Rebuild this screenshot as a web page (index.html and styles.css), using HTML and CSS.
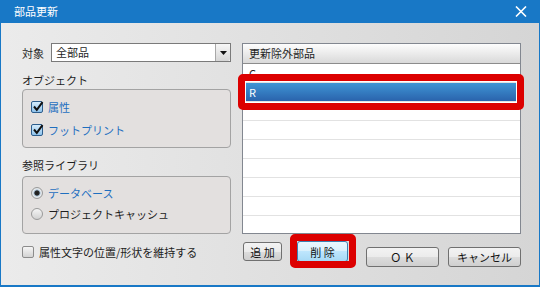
FILE: index.html
```html
<!DOCTYPE html>
<html lang="ja">
<head>
  <meta charset="UTF-8">
  <title>部品更新</title>
  <link rel="stylesheet" href="styles.css">
</head>
<body>
  <div class="window">
    <!-- Title bar -->
    <div class="titlebar">
      <span class="title">部品更新</span>
      <svg class="close" width="12" height="11" viewBox="0 0 12 11">
        <path d="M1 0.5 L11 10.5 M11 0.5 L1 10.5" stroke="#fff" stroke-width="1.6" fill="none"/>
      </svg>
    </div>

    <div class="content">
      <!-- Left side: options -->
      <div class="left">
        <div class="target-row">
          <span class="target-label">対象</span>
          <div class="combo">
            <span class="combo-text">全部品</span>
            <span class="combo-btn">
              <svg width="7" height="4" viewBox="0 0 7 4"><path d="M0 0 H7 L3.5 4 Z" fill="#111"/></svg>
            </span>
          </div>
        </div>

        <div class="section-label">オブジェクト</div>
        <div class="group group-object">
          <div class="option checked">
            <span class="check on">
              <svg class="tick" width="12" height="12" viewBox="0 0 12 12"><path d="M2 5.5 L4.8 8.8 L10.5 1.2" stroke="#111" stroke-width="2" fill="none"/></svg>
            </span>
            属性
          </div>
          <div class="option checked">
            <span class="check on">
              <svg class="tick" width="12" height="12" viewBox="0 0 12 12"><path d="M2 5.5 L4.8 8.8 L10.5 1.2" stroke="#111" stroke-width="2" fill="none"/></svg>
            </span>
            フットプリント
          </div>
        </div>

        <div class="section-label section-library">参照ライブラリ</div>
        <div class="group group-library">
          <div class="option radio-option checked"><span class="radio on"></span>データベース</div>
          <div class="option radio-option"><span class="radio"></span>プロジェクトキャッシュ</div>
        </div>

        <div class="option keep"><span class="check"></span>属性文字の位置/形状を維持する</div>
      </div>

      <!-- Right side: exclusion list and buttons -->
      <div class="right">
        <div class="list">
          <div class="list-header">更新除外部品</div>
          <div class="list-row">C</div>
          <div class="list-row selected">R<span class="mark mark-row"></span></div>
          <div class="list-row"></div>
          <div class="list-row"></div>
          <div class="list-row"></div>
          <div class="list-row"></div>
          <div class="list-row"></div>
          <div class="list-row"></div>
        </div>

        <div class="buttons">
          <button class="btn btn-add">追 加</button>
          <button class="btn btn-delete">削 除<span class="mark mark-btn"></span></button>
          <button class="btn btn-ok">Ｏ Ｋ</button>
          <button class="btn btn-cancel">キャンセル</button>
        </div>
      </div>
    </div>
  </div>
</body>
</html>
```

FILE: styles.css
```css
* {
  box-sizing: border-box;
}

body {
  margin: 0;
  font-family: "Noto Sans CJK JP", "Noto Sans", sans-serif;
  font-size: 11px;
  color: #1e1e1e;
}

.window {
  width: 540px;
  height: 287px;
  background: #1878c6;
  padding: 0 1px 2px 1px;
  display: flex;
  flex-direction: column;
}

/* Title bar */
.titlebar {
  height: 23px;
  margin: 0 -1px;
  padding: 0 13px 1px 14px;
  display: flex;
  align-items: center;
  justify-content: space-between;
  color: #fff;
  font-size: 11px;
}

.content {
  flex: 1;
  background: linear-gradient(to right, #ebebeb, #d5d5d5);
  display: flex;
  gap: 11px;
  padding: 20px 0 0 21px;
}

/* Left column */
.left {
  width: 209px;
  display: flex;
  flex-direction: column;
}

.target-row {
  height: 19px;
  display: flex;
  align-items: center;
}

.target-label {
  width: 29px;
  line-height: 14px;
}

.combo {
  width: 180px;
  height: 19px;
  border: 1px solid #7a7a7a;
  background: #fff;
  display: flex;
}

.combo-text {
  flex: 1;
  padding-left: 4px;
  line-height: 17px;
}

.combo-btn {
  width: 15px;
  border-left: 1px solid #a8a8a8;
  border-radius: 0 2px 2px 0;
  background: linear-gradient(#f7f7f7, #d6d6d6);
  display: flex;
  align-items: center;
  justify-content: center;
}

.section-label {
  margin-top: 11px;
  line-height: 14px;
}

.section-library {
  margin-top: 10px;
}

.group {
  border: 1px solid #a3a3a3;
  border-radius: 4px;
  background: #e3e0df;
  padding: 5px 0 0 8px;
}

.group-object {
  margin-top: 2px;
  height: 59px;
}

.group-library {
  margin-top: 4px;
  height: 58px;
}

.option {
  height: 23px;
  display: flex;
  align-items: center;
  gap: 5px;
  line-height: 14px;
}

.option.checked {
  color: #1f6fbf;
}

.radio-option {
  height: 21px;
}

.keep {
  margin-top: 11px;
  height: 14px;
}

/* Check boxes and radio buttons */
.check {
  position: relative;
  width: 12px;
  height: 12px;
  flex: none;
  border: 1px solid #8c8c8c;
  border-radius: 2px;
  background: linear-gradient(#f6f6f6, #d3d3d3);
}

.check.on {
  border-color: #2c5d8c;
  background: linear-gradient(#d4ebfb, #8fc3ec);
}

.tick {
  position: absolute;
  left: 0;
  top: -1px;
}

.radio {
  width: 12px;
  height: 12px;
  flex: none;
  border: 1px solid #9a9a9a;
  border-radius: 50%;
  background: linear-gradient(#f5f5f5, #d2d2d2);
}

.radio.on {
  background: radial-gradient(circle, #1a1a1a 0, #2a2a2a 2.2px, #9fb7cc 3px, #e9eef2 4px, #d6d6d6 6px);
}

/* Exclusion list */
.right {
  width: 279px;
}

.list {
  height: 191px;
  border: 1px solid #828790;
  background: #fff;
}

.list-header {
  height: 20px;
  padding-left: 6px;
  border-bottom: 1px solid #8c8c8c;
  background: linear-gradient(#fdfdfd, #d9d9d9);
  line-height: 19px;
}

.list-row {
  position: relative;
  height: 19px;
  padding-left: 6px;
  border-bottom: 1px solid #e2e2e2;
  line-height: 18px;
}

.list-row.selected {
  color: #fff;
  background: linear-gradient(#3f95d5, #2a63ac);
}

/* Red annotation frames */
.mark {
  position: absolute;
  border: 7px solid #dc0000;
  border-radius: 5px;
  box-shadow: inset 0 0 0 1px #fff;
}

.mark-row {
  left: -5px;
  right: -4px;
  top: -9px;
  bottom: -9px;
}

.mark-btn {
  left: -8px;
  right: -9px;
  top: -8px;
  bottom: -7px;
  box-shadow: none;
}

/* Buttons */
.buttons {
  display: flex;
  align-items: flex-start;
  margin-top: 8px;
}

.btn {
  position: relative;
  padding: 0;
  font: inherit;
  font-size: 11px;
  color: #111;
  border: 1px solid #707070;
  border-radius: 3px;
  background: linear-gradient(#f3f3f3 0%, #ebebeb 50%, #dddddd 50%, #cfcfcf 100%);
  line-height: 14px;
}

.btn-add {
  width: 39px;
  height: 19px;
  margin-left: 1px;
}

.btn-delete {
  width: 51px;
  height: 21px;
  margin-left: 15px;
  margin-top: -1px;
  border-color: #3c7fb1;
  background: linear-gradient(#eaf6fd 0%, #d9f0fc 50%, #bee6fd 50%, #a7d9f5 100%);
}

.btn-ok,
.btn-cancel {
  width: 73px;
  height: 20px;
  margin-top: 5px;
}

.btn-ok {
  margin-left: 18px;
}

.btn-cancel {
  margin-left: 9px;
}
```
